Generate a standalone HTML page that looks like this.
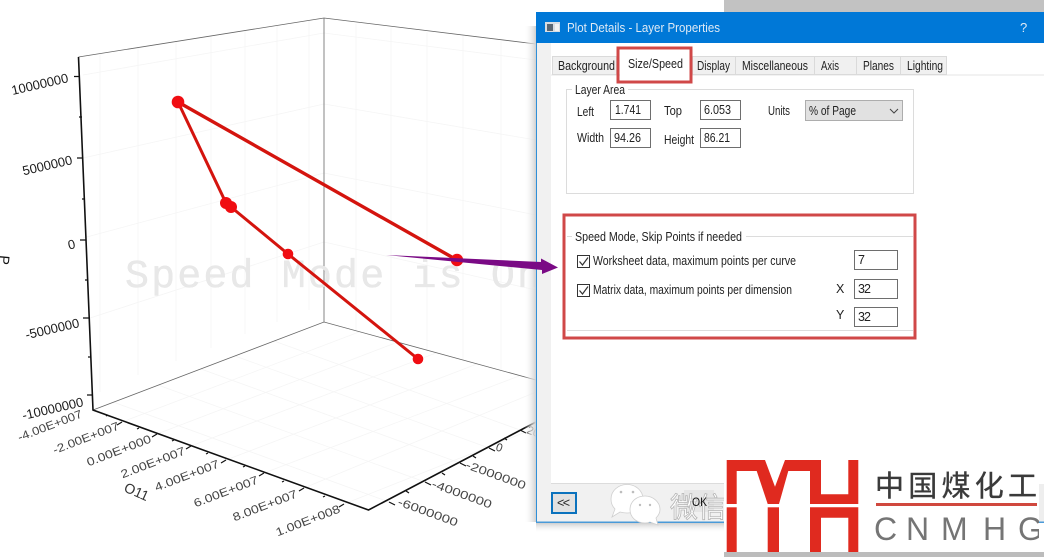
<!DOCTYPE html>
<html><head><meta charset="utf-8"><style>
html,body{margin:0;padding:0;background:#fff}
svg{display:block}
text{font-family:"Liberation Sans","Noto Sans CJK SC",sans-serif}
.d{font-size:12.5px;fill:#222}
.xl{font-size:11.5px;fill:#444;text-anchor:end}
.yl{font-size:11.5px;fill:#444}
.zl{font-size:13px;fill:#1a1a1a;text-anchor:end}
.tb{fill:#fff;stroke:#6e6e6e;stroke-width:1}
.tabr{fill:#f0f0f0;stroke:#dadada;stroke-width:1}
</style></head><body>
<svg width="1044" height="557" viewBox="0 0 1044 557" xmlns="http://www.w3.org/2000/svg">
<defs>
<linearGradient id="sl" x1="0" x2="1" y1="0" y2="0"><stop offset="0" stop-color="#fff" stop-opacity="0"/><stop offset="1" stop-color="#d0d0d0"/></linearGradient>
<linearGradient id="sb" x1="0" x2="0" y1="0" y2="1"><stop offset="0" stop-color="#c4c4c4"/><stop offset="1" stop-color="#fff" stop-opacity="0"/></linearGradient>
</defs>
<rect width="1044" height="557" fill="#fff"/>
<!-- grid -->
<g stroke="#f5f5f5" stroke-width="0.8" fill="none">
<path d="M100 54V392M138 47V375M176 41V361M211 36V348M245 31V334M277 26V322M309 20V310"/>
<path d="M356 24V330M391 28V340M427 32V350M463 36V360M501 41V371"/>
<path d="M83 75L324 33L536 60M83 158L324 104L536 140M83 238L324 173L536 215M90 318L324 242L536 290"/>
<path d="M122 422L359 332M157 434L398 342M191 446L436 353M226 460L477 364M264 473L519 376M304 488L536 392M344 504L536 428"/>
<path d="M460 463L201 369M425 482L158 385M389 502L113 402M489 448L235 356M520 430L274 341"/>
</g>
<!-- box -->
<g fill="none" stroke="#666" stroke-width="0.8">
<path d="M78.5 57L324 18L536 44"/>
<path d="M324 18V322"/>
<path d="M93 410L324 322L536 380"/>
</g>
<!-- watermark mode text -->
<text x="125" y="287" font-size="40" style="font-family:'Liberation Mono',monospace" fill="#e8e8e8" stroke="#e4e4e4" stroke-width="0.3" textLength="416" lengthAdjust="spacing">Speed Mode is On</text>
<!-- axes -->
<g fill="none" stroke="#111" stroke-width="1.6">
<path d="M78.5 57L93 410L368.5 510L536 422"/>
<path stroke-width="1.3" d="M74 76.5H79.5M77 158H82.5M80 240H86M83 318H89M87 395H92.5M79 117H82M82 199H85M85 280H88M88 357H91"/>
<path stroke-width="1.2" d="M122 422L117 425M157 434L152 437M191 446L186 449M226 460L221 463M264 473L259 476M304 488L299 491M344 504L339 507M108 415L106 416M139 428L137 429M174 440L172 441M208 453L206 454M245 466L243 467M284 481L282 482M325 496L323 497"/>
<path stroke-width="1.2" d="M460 463L466 466M425 482L431 485M389 502L395 505M489 448L495 451M520 430L526 433M442 473L445 475M406 491L409 493M473 456L476 458M504 438L507 440"/>
</g>
<!-- axis labels -->
<g>
<text class="zl" x="69" y="82" transform="rotate(-13 69 82)">10000000</text>
<text class="zl" x="73" y="164" transform="rotate(-13 73 164)">5000000</text>
<text class="zl" x="76" y="248" transform="rotate(-13 76 248)">0</text>
<text class="zl" x="80" y="327" transform="rotate(-13 80 327)">-5000000</text>
<text class="zl" x="84" y="406" transform="rotate(-13 84 406)">-10000000</text>
<text x="0" y="255" font-size="14" fill="#111" transform="rotate(95 0 255)">P</text>
<text class="xl" x="83" y="417" transform="rotate(-21 83 417)" textLength="68" lengthAdjust="spacingAndGlyphs">-4.00E+007</text>
<text class="xl" x="120" y="429" transform="rotate(-21 120 429)" textLength="70" lengthAdjust="spacingAndGlyphs">-2.00E+007</text>
<text class="xl" x="152" y="442" transform="rotate(-21 152 442)" textLength="68" lengthAdjust="spacingAndGlyphs">0.00E+000</text>
<text class="xl" x="186" y="454" transform="rotate(-21 186 454)" textLength="68" lengthAdjust="spacingAndGlyphs">2.00E+007</text>
<text class="xl" x="220" y="467" transform="rotate(-21 220 467)" textLength="68" lengthAdjust="spacingAndGlyphs">4.00E+007</text>
<text class="xl" x="259" y="483" transform="rotate(-21 259 483)" textLength="68" lengthAdjust="spacingAndGlyphs">6.00E+007</text>
<text class="xl" x="298" y="497" transform="rotate(-21 298 497)" textLength="68" lengthAdjust="spacingAndGlyphs">8.00E+007</text>
<text class="xl" x="341" y="512" transform="rotate(-21 341 512)" textLength="68" lengthAdjust="spacingAndGlyphs">1.00E+008</text>
<text x="123" y="491" font-size="14" fill="#333" transform="rotate(24 123 491)">O11</text>
<text class="yl" x="495" y="450" transform="rotate(20 495 450)">0</text>
<text class="yl" x="465" y="468" transform="rotate(20 465 468)" textLength="63" lengthAdjust="spacingAndGlyphs">-2000000</text>
<text class="yl" x="431" y="487" transform="rotate(20 431 487)" textLength="63" lengthAdjust="spacingAndGlyphs">-4000000</text>
<text class="yl" x="397" y="505" transform="rotate(20 397 505)" textLength="63" lengthAdjust="spacingAndGlyphs">-6000000</text>
<text class="yl" x="526" y="433" transform="rotate(20 526 433)">2000000</text>
</g>
<!-- data -->
<g fill="none" stroke="#d4140e" stroke-linecap="round">
<path stroke-width="3.4" d="M178 102L457 260"/>
<path stroke-width="3" d="M178 102L226 203L231 207L288 254L418 359"/>
</g>
<g fill="#f00d12">
<circle cx="178" cy="102" r="6.3"/><circle cx="226" cy="203" r="6"/><circle cx="231" cy="207" r="6"/>
<circle cx="288" cy="254" r="5.3"/><circle cx="457" cy="260" r="6.2"/><circle cx="418" cy="359" r="5.3"/>
</g>
<!-- top grey -->
<rect x="724" y="0" width="320" height="13" fill="#c2c2c2"/>
<!-- dialog shadow -->
<rect x="524" y="26" width="12" height="496" fill="url(#sl)"/>
<rect x="536" y="522" width="190" height="11" fill="url(#sb)"/>
<!-- dialog -->
<rect x="536" y="12" width="508" height="511" fill="#f1f1f1"/>
<rect x="536" y="12" width="508" height="31" fill="#0078d7"/>
<rect x="536" y="43" width="1" height="480" fill="#2f8fd8"/>
<rect x="536" y="521.5" width="508" height="1.5" fill="#4a9ad8"/>
<rect x="551" y="43" width="493" height="440" fill="#fff"/>
<rect x="551" y="74.5" width="493" height="1" fill="#e4e4e4"/>
<rect x="551" y="483" width="493" height="1" fill="#dcdcdc"/>
<!-- title -->
<rect x="545" y="22" width="15" height="10" fill="#d8dde2"/><rect x="547" y="24" width="6" height="7" fill="#5a6672"/><rect x="555" y="24" width="4" height="7" fill="#f2f2f2"/>
<text x="567" y="32" font-size="13" fill="#dfeaf5" textLength="153" lengthAdjust="spacingAndGlyphs">Plot Details - Layer Properties</text>
<text x="1020" y="32" font-size="13" fill="#dfeaf5">?</text>
<!-- tabs -->
<rect class="tabr" x="552.5" y="56.5" width="64" height="18"/>
<rect class="tabr" x="692.5" y="56.5" width="43" height="18"/>
<rect class="tabr" x="735.5" y="56.5" width="79" height="18"/>
<rect class="tabr" x="814.5" y="56.5" width="42" height="18"/>
<rect class="tabr" x="856.5" y="56.5" width="44" height="18"/>
<rect class="tabr" x="900.5" y="56.5" width="46" height="18"/>
<rect x="620" y="52" width="70" height="26" fill="#fff"/>
<text class="d" x="558" y="70" textLength="57" lengthAdjust="spacingAndGlyphs">Background</text>
<text class="d" x="628" y="68" textLength="55" lengthAdjust="spacingAndGlyphs">Size/Speed</text>
<text class="d" x="697" y="70" textLength="33" lengthAdjust="spacingAndGlyphs">Display</text>
<text class="d" x="742" y="70" textLength="66" lengthAdjust="spacingAndGlyphs">Miscellaneous</text>
<text class="d" x="821" y="70" textLength="18" lengthAdjust="spacingAndGlyphs">Axis</text>
<text class="d" x="863" y="70" textLength="31" lengthAdjust="spacingAndGlyphs">Planes</text>
<text class="d" x="907" y="70" textLength="36" lengthAdjust="spacingAndGlyphs">Lighting</text>
<rect x="618" y="48" width="73" height="34" fill="none" stroke="#d04848" stroke-width="3"/>
<!-- layer area -->
<rect x="566.5" y="89.5" width="347" height="104" fill="none" stroke="#dcdcdc"/>
<rect x="572" y="84" width="56" height="12" fill="#fff"/>
<text class="d" x="575" y="94" textLength="50" lengthAdjust="spacingAndGlyphs">Layer Area</text>
<text class="d" x="577" y="116" textLength="17" lengthAdjust="spacingAndGlyphs">Left</text>
<rect class="tb" x="610.5" y="100.5" width="40" height="19"/>
<text class="d" x="615" y="114" textLength="26" lengthAdjust="spacingAndGlyphs">1.741</text>
<text class="d" x="664" y="115" textLength="18" lengthAdjust="spacingAndGlyphs">Top</text>
<rect class="tb" x="700.5" y="100.5" width="40" height="19"/>
<text class="d" x="704" y="114" textLength="27" lengthAdjust="spacingAndGlyphs">6.053</text>
<text class="d" x="768" y="115" textLength="22" lengthAdjust="spacingAndGlyphs">Units</text>
<rect x="805.5" y="100.5" width="97" height="20" fill="#e1e1e1" stroke="#adadad"/>
<text class="d" x="809" y="115" textLength="47" lengthAdjust="spacingAndGlyphs">% of Page</text>
<path d="M890 109L894 113L898 109" fill="none" stroke="#444" stroke-width="1"/>
<text class="d" x="577" y="142" textLength="27" lengthAdjust="spacingAndGlyphs">Width</text>
<rect class="tb" x="610.5" y="128.5" width="40" height="19"/>
<text class="d" x="614" y="142" textLength="27" lengthAdjust="spacingAndGlyphs">94.26</text>
<text class="d" x="664" y="144" textLength="30" lengthAdjust="spacingAndGlyphs">Height</text>
<rect class="tb" x="700.5" y="128.5" width="40" height="19"/>
<text class="d" x="704" y="142" textLength="26" lengthAdjust="spacingAndGlyphs">86.21</text>
<!-- speed -->
<path d="M567 236.5H913M567 330.5H913" stroke="#dcdcdc" fill="none"/>
<rect x="572" y="230" width="174" height="13" fill="#fff"/>
<text class="d" x="575" y="241" textLength="167" lengthAdjust="spacingAndGlyphs">Speed Mode, Skip Points if needed</text>
<rect x="577.5" y="255.5" width="12" height="12" fill="#fff" stroke="#333"/>
<path d="M579.5 261.5L582.5 265L588 257.5" fill="none" stroke="#333" stroke-width="1.2"/>
<text class="d" x="593" y="265" textLength="203" lengthAdjust="spacingAndGlyphs">Worksheet data, maximum points per curve</text>
<rect x="577.5" y="284.5" width="12" height="12" fill="#fff" stroke="#333"/>
<path d="M579.5 290.5L582.5 294L588 286.5" fill="none" stroke="#333" stroke-width="1.2"/>
<text class="d" x="593" y="294" textLength="199" lengthAdjust="spacingAndGlyphs">Matrix data, maximum points per dimension</text>
<rect class="tb" x="854.5" y="250.5" width="43" height="19"/>
<text class="d" x="858" y="264">7</text>
<text class="d" x="836" y="293">X</text>
<rect class="tb" x="854.5" y="279.5" width="43" height="19"/>
<text class="d" x="858" y="293" textLength="13">32</text>
<text class="d" x="836" y="319">Y</text>
<rect class="tb" x="854.5" y="307.5" width="43" height="19"/>
<text class="d" x="858" y="321" textLength="13">32</text>
<rect x="564" y="215" width="351" height="123" fill="none" stroke="#d04848" stroke-width="3"/>
<!-- arrow -->
<path d="M386 255L541 262L541 258.5L558 267.5L542 274L542 270Z" fill="#7a0a85"/>
<!-- bottom -->
<rect x="552" y="493" width="24" height="20" fill="#e1e1e1" stroke="#0b72bd" stroke-width="2"/>
<text class="d" x="557" y="507" textLength="13" font-size="11">&lt;&lt;</text>
<rect x="684" y="490" width="30" height="22" fill="#e6e6e6"/>
<!-- wechat watermark -->
<g fill="#fff" stroke="#cfcfcf" stroke-width="0.8">
<path d="M627 484.5C636 484.5 643 491 643 499C643 507 636 513 627 513C624 513 622 512.5 620 512L612 517L615 509C612 506 611 503 611 499C611 491 618 484.5 627 484.5Z"/>
<path d="M645 496C653 496 660 502 660 509.5C660 513 658 516 656 518L658 525L650 522C648 523 647 523 645 523C636 523 630 517 630 509.5C630 502 636 496 645 496Z"/>
</g>
<g fill="#bdbdbd"><circle cx="621" cy="492" r="1.3"/><circle cx="633" cy="492" r="1.3"/><circle cx="640" cy="505" r="1.2"/><circle cx="650" cy="505" r="1.2"/></g>
<text x="670" y="517" font-size="28" fill="#fff" stroke="#b5b5b5" stroke-width="0.8">微信</text>
<text x="692" y="506" font-size="12" fill="#111" textLength="15" lengthAdjust="spacingAndGlyphs">OK</text>
<!-- logo -->
<rect x="724" y="457" width="320" height="100" fill="#fff"/>
<g fill="#e02a1f">
<path d="M726.7 460H765L775 486.7L785 460H821V494.3H848.3V460H858.3V504H810V471H788.3L779 504H767.7L756.7 471H736.7V504H726.7Z"/>
<rect x="726.7" y="507.3" width="10" height="44.7"/>
<rect x="767.7" y="507.3" width="11.3" height="44.7"/>
<path d="M810 507.3H858.3V552H848.3V517.7H821V552H810Z"/>
</g>
<text x="875" y="496" font-size="29" fill="#3a3a3a" stroke="#3a3a3a" stroke-width="0.35" textLength="162" lengthAdjust="spacing">中国煤化工</text>
<rect x="876" y="503" width="161" height="3" fill="#d0483e"/>
<g font-size="32" fill="#757575">
<text x="874" y="540">C</text><text x="906" y="540">N</text><text x="941" y="540">M</text><text x="983" y="540">H</text><text x="1018" y="540">G</text>
</g>
<rect x="1039" y="484" width="5" height="38" fill="#eeeeee"/>
<rect x="1039" y="521.5" width="5" height="1.5" fill="#4a9ad8"/>
<rect x="1039" y="523" width="5" height="29" fill="#fff"/>
<rect x="724" y="552" width="320" height="5" fill="#bcbcbc"/>
</svg>
</body></html>
